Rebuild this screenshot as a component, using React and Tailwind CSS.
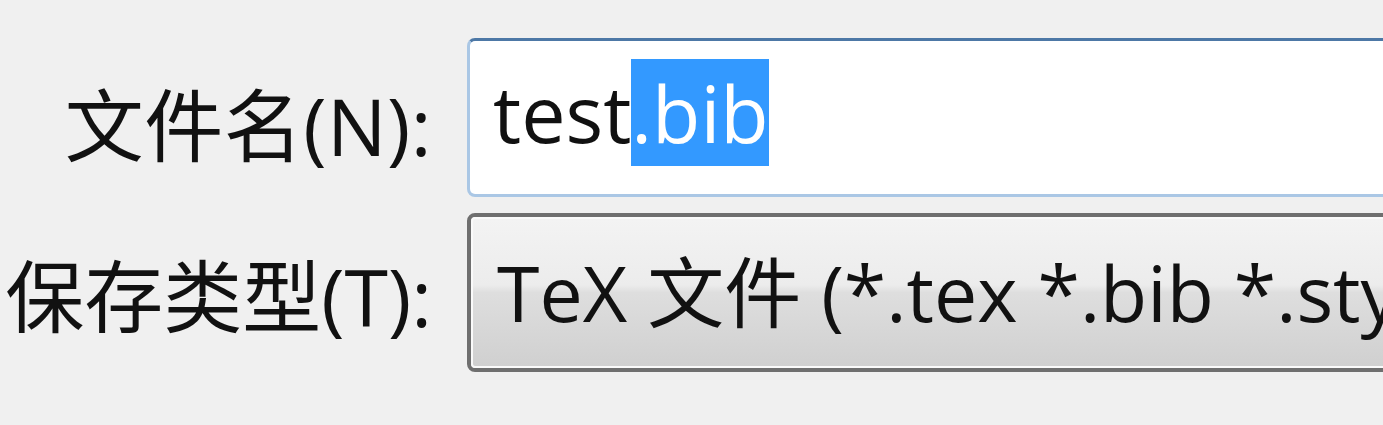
export default function App() {
    return (
        <div className="w-[1383px] h-[425px] overflow-hidden bg-[#f0f0f0] pt-[38px] text-[#111] font-['Open_Sans','Noto_Sans_CJK_SC',sans-serif]">
            <div className="grid grid-cols-[432px_1000px] gap-x-[35px] gap-y-[16px]">
                <label htmlFor="filename" className="self-center text-right text-[79px] leading-none pt-[16px] whitespace-nowrap tracking-[0.5px]">文件名(N):</label>
                <div id="filename" className="h-[159px] rounded-[8px] border-[3px] border-[#aac7e5] border-t-[#4d78a6] bg-white flex items-center pl-[23px] pb-[10px] text-[79px] leading-none">
                    <span>test</span>
                    <span className="bg-[#3399ff] text-white py-[14px]">.bib</span>
                </div>

                <label className="self-center text-right text-[79px] leading-none pt-[8px] whitespace-nowrap">保存类型(T):</label>
                <div className="h-[159px] rounded-[8px] border-[4px] border-[#6f6f6f] overflow-hidden">
                    <div className="h-full border-[2px] border-[#fafafa] rounded-[4px] bg-[linear-gradient(to_bottom,#f3f3f3_0%,#ececec_45%,#dedede_50%,#d0d0d0_100%)] flex items-center pl-[24px] text-[77px] leading-none whitespace-nowrap">
                        TeX 文件 (*.tex *.bib *.sty)
                    </div>
                </div>
            </div>
        </div>
    )
}
